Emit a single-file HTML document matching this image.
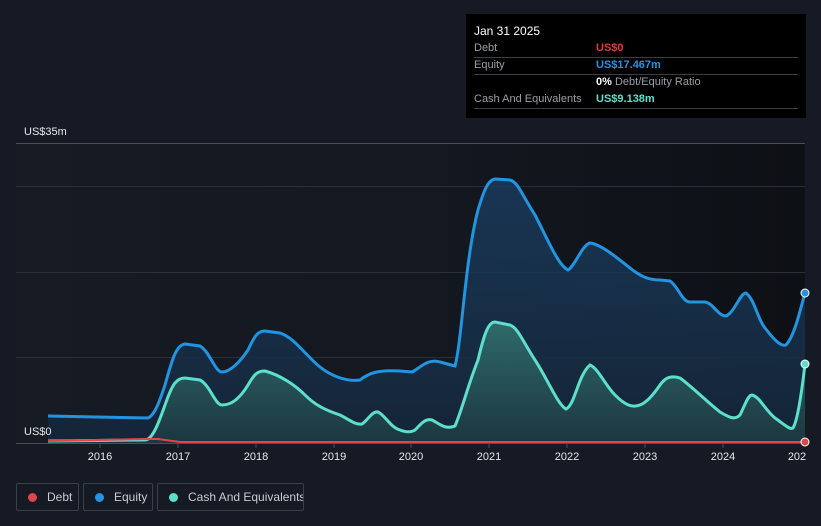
<!DOCTYPE html>
<html><head><style>
body{margin:0;background:#151a24;width:821px;height:526px;overflow:hidden;font-family:"Liberation Sans",sans-serif;position:relative}
.tt{position:absolute;left:466px;top:14px;width:340px;height:104px;background:#000;color:#fff;font-size:11px}
.tt .r{position:absolute;left:8px;right:8px;border-bottom:1px solid #3a3d44;height:17px;line-height:17px}
.tt .l{color:#9a9ea6;position:absolute;left:0}
.tt .v{position:absolute;left:122px;font-weight:bold}
.lg{position:absolute;top:483px;height:28px;box-sizing:border-box;border:1px solid #3a404b;border-radius:2px;color:#c8ccd2;font-size:12px;line-height:26px;white-space:nowrap;overflow:hidden}
.lg i{display:inline-block;width:9px;height:9px;border-radius:50%;margin:0 10px 0 11px;vertical-align:-1px}
</style></head><body>
<svg width="821" height="526" style="position:absolute;left:0;top:0">
<defs>
<linearGradient id="bg" x1="0" x2="1"><stop offset="0" stop-color="#161b24"/><stop offset="0.5" stop-color="#141820"/><stop offset="1" stop-color="#0d1015"/></linearGradient>
<linearGradient id="ef" x1="0" y1="0" x2="0" y2="1"><stop offset="0" stop-color="#1a3d60" stop-opacity="0.8"/><stop offset="1" stop-color="#15263a" stop-opacity="0.9"/></linearGradient>
<linearGradient id="cf" x1="0" y1="0" x2="0" y2="1"><stop offset="0" stop-color="#2f6a6a"/><stop offset="1" stop-color="#1c3640"/></linearGradient>
</defs>
<rect x="16" y="143" width="789" height="300" fill="url(#bg)"/>
<g stroke="#2a2f38" stroke-width="1"><line x1="16" y1="143.5" x2="805" y2="143.5" stroke="#4a4e56"/><line x1="16" y1="186.5" x2="805" y2="186.5"/><line x1="16" y1="272.5" x2="805" y2="272.5"/><line x1="16" y1="357.5" x2="805" y2="357.5"/><line x1="16" y1="443.5" x2="805" y2="443.5" stroke="#4a4e56"/></g>
<g stroke="#4a4e56"><line x1="100" y1="443" x2="100" y2="448"/><line x1="178" y1="443" x2="178" y2="448"/><line x1="256" y1="443" x2="256" y2="448"/><line x1="334" y1="443" x2="334" y2="448"/><line x1="411" y1="443" x2="411" y2="448"/><line x1="489" y1="443" x2="489" y2="448"/><line x1="567" y1="443" x2="567" y2="448"/><line x1="645" y1="443" x2="645" y2="448"/><line x1="723" y1="443" x2="723" y2="448"/></g>
<path d="M48,416 L148,418 C155,415 160,400 165,385 C172,360 176,345 185,344 L200,346 C210,352 215,372 222,372 C230,372 240,362 248,350 C255,335 258,331 265,331 L280,333 C295,338 305,355 320,367 C330,375 345,382 360,380 C370,372 380,370 400,371 L412,372 C420,368 428,358 440,362 L455,366 C462,340 465,260 478,210 C484,190 488,180 495,179 L510,180 C518,182 522,195 535,215 C548,240 558,265 568,270 C575,266 582,245 590,243 C600,244 615,256 630,268 C640,276 648,280 660,280 L670,281 C678,286 682,302 690,302 L705,302 C713,303 718,316 726,316 C735,312 740,293 746,293 C755,300 757,318 765,328 C772,337 780,347 786,345 C795,335 800,310 805,293 L805,443 L48,443Z" fill="url(#ef)" stroke="none"/>
<path d="M48,416 L148,418 C155,415 160,400 165,385 C172,360 176,345 185,344 L200,346 C210,352 215,372 222,372 C230,372 240,362 248,350 C255,335 258,331 265,331 L280,333 C295,338 305,355 320,367 C330,375 345,382 360,380 C370,372 380,370 400,371 L412,372 C420,368 428,358 440,362 L455,366 C462,340 465,260 478,210 C484,190 488,180 495,179 L510,180 C518,182 522,195 535,215 C548,240 558,265 568,270 C575,266 582,245 590,243 C600,244 615,256 630,268 C640,276 648,280 660,280 L670,281 C678,286 682,302 690,302 L705,302 C713,303 718,316 726,316 C735,312 740,293 746,293 C755,300 757,318 765,328 C772,337 780,347 786,345 C795,335 800,310 805,293" fill="none" stroke="#2394e0" stroke-width="3"/>
<path d="M48,441 L145,440 C152,440 158,425 165,405 C172,385 176,378 185,378 L200,380 C210,385 215,405 222,405 C232,405 240,398 248,385 C255,373 258,371 265,371 C280,375 295,385 305,395 C315,405 325,410 340,415 C350,420 355,425 362,424 C368,420 372,411 378,412 C385,415 390,427 400,430 C405,432 410,433 415,430 C420,425 425,418 432,420 C440,424 445,430 455,426 C462,410 468,385 478,360 C484,335 488,322 495,322 L510,325 C518,328 522,340 535,360 C548,380 558,405 566,409 C575,405 578,375 590,365 C598,368 605,385 615,395 C625,405 632,408 640,405 C648,402 655,392 660,385 C665,378 670,375 680,378 C690,385 705,400 720,412 C730,418 735,420 740,415 C745,405 748,395 752,395 C760,397 765,410 775,418 C785,425 790,430 793,428 C798,420 802,390 805,364 L805,443 L48,443Z" fill="url(#cf)" stroke="none"/>
<path d="M48,441 L145,440 C152,440 158,425 165,405 C172,385 176,378 185,378 L200,380 C210,385 215,405 222,405 C232,405 240,398 248,385 C255,373 258,371 265,371 C280,375 295,385 305,395 C315,405 325,410 340,415 C350,420 355,425 362,424 C368,420 372,411 378,412 C385,415 390,427 400,430 C405,432 410,433 415,430 C420,425 425,418 432,420 C440,424 445,430 455,426 C462,410 468,385 478,360 C484,335 488,322 495,322 L510,325 C518,328 522,340 535,360 C548,380 558,405 566,409 C575,405 578,375 590,365 C598,368 605,385 615,395 C625,405 632,408 640,405 C648,402 655,392 660,385 C665,378 670,375 680,378 C690,385 705,400 720,412 C730,418 735,420 740,415 C745,405 748,395 752,395 C760,397 765,410 775,418 C785,425 790,430 793,428 C798,420 802,390 805,364" fill="none" stroke="#5ce0cc" stroke-width="3"/>
<path d="M48,441 L145,439 L158,439 L180,442 L805,442" fill="none" stroke="#e0454d" stroke-width="2"/>
<circle cx="805" cy="293" r="4" fill="#2394e0" stroke="#fff" stroke-width="1"/>
<circle cx="805" cy="364" r="4" fill="#5ce0cc" stroke="#fff" stroke-width="1"/>
<circle cx="805" cy="442" r="4" fill="#e0454d" stroke="#fff" stroke-width="1"/>
<g fill="#e6e8ea" font-size="11" font-family="Liberation Sans"><text x="24" y="135">US$35m</text><text x="24" y="435">US$0</text>
<g text-anchor="middle"><text x="100" y="460">2016</text><text x="178" y="460">2017</text><text x="256" y="460">2018</text><text x="334" y="460">2019</text><text x="411" y="460">2020</text><text x="489" y="460">2021</text><text x="567" y="460">2022</text><text x="645" y="460">2023</text><text x="723" y="460">2024</text><text x="797" y="460">202</text></g></g>
</svg>
<div class="tt">
<div style="position:absolute;left:8px;top:10px;font-size:12px">Jan 31 2025</div>
<div class="r" style="top:26px"><span class="l">Debt</span><span class="v" style="color:#e0393e">US$0</span></div>
<div class="r" style="top:43px"><span class="l">Equity</span><span class="v" style="color:#2394e0">US$17.467m</span></div>
<div class="r" style="top:60px;border:none"><span class="v" style="color:#fff">0% <span style="color:#9a9ea6;font-weight:normal">Debt/Equity Ratio</span></span></div>
<div class="r" style="top:77px"><span class="l">Cash And Equivalents</span><span class="v" style="color:#5ce0cc">US$9.138m</span></div>
</div>
<div class="lg" style="left:16px;width:63px"><i style="background:#e0454d"></i>Debt</div>
<div class="lg" style="left:83px;width:70px"><i style="background:#2394e0"></i>Equity</div>
<div class="lg" style="left:157px;width:147px"><i style="background:#5ce0cc"></i>Cash And Equivalents</div>
</body></html>
